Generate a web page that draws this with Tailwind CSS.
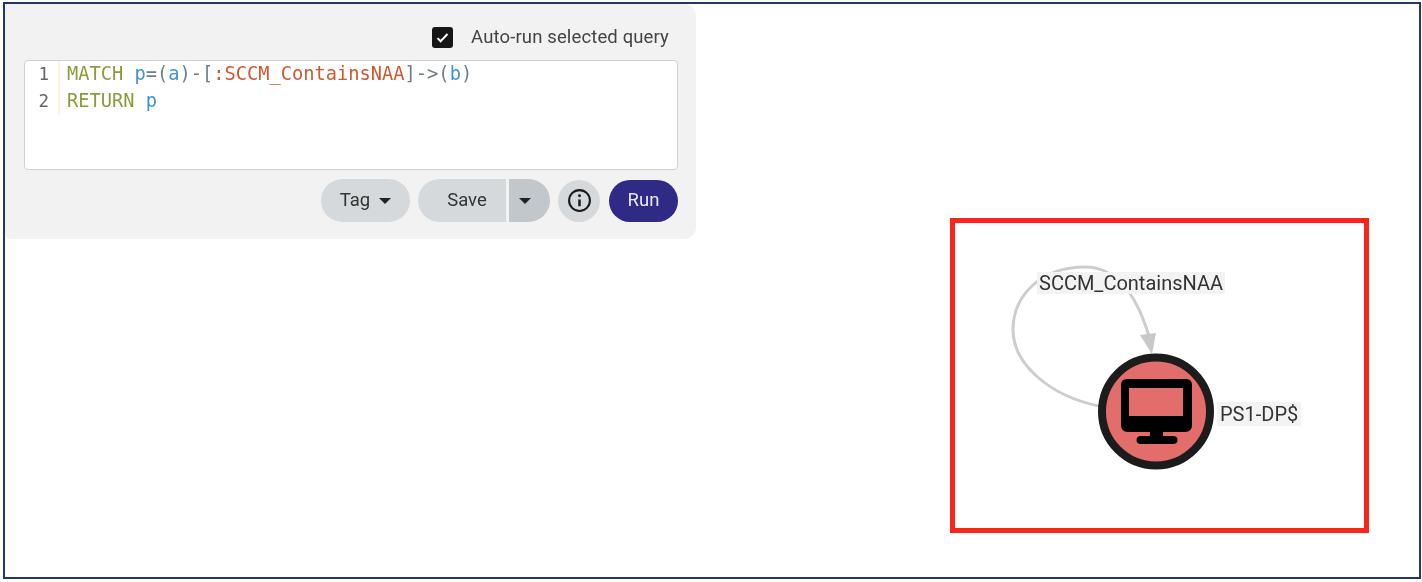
<!DOCTYPE html>
<html lang="en">
<head>
  <meta charset="UTF-8" />
  <meta name="viewport" content="width=device-width, initial-scale=1.0"/>
  <title>Cypher query</title>
  <script src="https://cdn.jsdelivr.net/npm/@tailwindcss/browser@4"></script>
</head>
<body class="bg-white w-[1422px] h-[582px] overflow-hidden font-['Roboto',sans-serif]">

  <!-- Screenshot frame -->
  <div class="relative ml-[3px] mt-[2px] w-[1418px] h-[577px] border-2 border-[#1f3864] bg-white blur-[0.5px]">

    <!-- Query panel -->
    <div class="w-[691px] h-[235px] bg-[#f2f2f2] rounded-br-xl rounded-tr-xl rounded-bl-md pt-[18px] pl-[19px] pr-[18px]">
      <div class="flex items-center justify-end h-[30px] pt-px pr-[9px] gap-[18px]">
        <span class="w-[21px] h-[21px] rounded-[3px] bg-[#161616] flex items-center justify-center">
          <svg width="15" height="15" viewBox="0 0 24 24" fill="none" stroke="white" stroke-width="3.2"><path d="M4 13l5 5L20 6.5"/></svg>
        </span>
        <span class="text-[18.5px] text-[#444] tracking-[0.13px]">Auto-run selected query</span>
      </div>

      <!-- Editor -->
      <div class="mt-2 h-[110px] bg-white border border-[#cfcfcf] rounded-[4px] flex font-['DejaVu_Sans_Mono',monospace] text-[18.7px] leading-[26.5px]">
        <div class="w-[35px] h-[54px] border-r-2 border-[#fbf1dc] text-right pr-[9px] text-[#666] text-[17.5px]">
          <div>1</div>
          <div>2</div>
        </div>
        <div class="pl-[7px]">
          <div class="whitespace-pre"><span class="text-[#8c9c3a]">MATCH</span> <span class="text-[#3f93d6]">p</span><span class="text-[#6f7f88]">=(</span><span class="text-[#3f93d6]">a</span><span class="text-[#6f7f88]">)-[</span><span class="text-[#d1582f]">:SCCM_ContainsNAA</span><span class="text-[#6f7f88]">]-&gt;(</span><span class="text-[#3f93d6]">b</span><span class="text-[#6f7f88]">)</span></div>
          <div class="whitespace-pre"><span class="text-[#8c9c3a]">RETURN</span> <span class="text-[#3f93d6]">p</span></div>
        </div>
      </div>

      <!-- Actions -->
      <div class="mt-[9px] flex justify-end items-center h-[43px] text-[18.5px] text-[#333]">
        <button class="w-[89px] h-[43px] rounded-full bg-[#d5d9dc] flex items-center justify-center gap-[9px]">
          Tag
          <svg width="12" height="6" viewBox="0 0 12 6"><path d="M0 0h12L6 6z" fill="#222"/></svg>
        </button>
        <div class="ml-2 flex h-[43px]">
          <button class="w-[88px] rounded-l-full bg-[#d5d9dc] pl-[10px]">Save</button>
          <button class="ml-[3px] w-[41px] rounded-r-full bg-[#c2c7cb] flex items-center justify-center pr-[9px]">
            <svg width="12" height="6" viewBox="0 0 12 6"><path d="M0 0h12L6 6z" fill="#222"/></svg>
          </button>
        </div>
        <button class="ml-2 w-[42px] h-[42px] rounded-full bg-[#d5d9dc] flex items-center justify-center">
          <svg width="25" height="25" viewBox="0 0 24 24" fill="none" stroke="#1a1a1a" stroke-width="2"><circle cx="12" cy="12" r="10"/><path d="M12 11v6.5" stroke-width="2.4"/><circle cx="12" cy="7.4" r="1.4" fill="#1a1a1a" stroke="none"/></svg>
        </button>
        <button class="ml-[9px] w-[69px] h-[42px] rounded-full bg-[#2e2a85] text-[#e8e8f4]">Run</button>
      </div>
    </div>

    <!-- Highlighted graph result -->
    <div class="absolute left-[945px] top-[214px] w-[419px] h-[315px] border-[5.5px] border-[#fb2418]"></div>
    <svg class="absolute left-0 top-0" width="1414" height="573" viewBox="5 4 1414 573" fill="none">
      <path d="M1099 406C1050 396 1012 364 1013 328C1014 296 1040 267 1085 267C1120 267 1138 300 1149 336" stroke="#cdcdcd" stroke-width="3"/>
      <path d="M1140 335L1156 333L1152 354z" fill="#c8c8c8"/>
      <circle cx="1156" cy="411.500" r="54" fill="#e26d6b" stroke="#1c1c1c" stroke-width="8"/>
      <path fill-rule="evenodd" d="M1127 379H1186Q1192 379 1192 385V425Q1192 432 1185 432H1163V436H1173Q1177.500 436 1177.500 440Q1177.500 444 1173 444H1141Q1136.500 444 1136.500 440Q1136.500 436 1141 436H1150V432H1128Q1121 432 1121 425V385Q1121 379 1127 379ZM1129 388V416H1183V388Z" fill="#000"/>
    </svg>
    <span class="absolute left-[1032px] top-[268px] h-[22px] px-[2px] bg-[#f3f3f3] text-[20px] leading-[22px] text-[#333]">SCCM_ContainsNAA</span>
    <span class="absolute left-[1212px] top-[398px] h-[24px] px-[3px] bg-[#f3f3f3] text-[20px] leading-[24px] text-[#333]">PS1-DP$</span>
  </div>
</body>
</html>
